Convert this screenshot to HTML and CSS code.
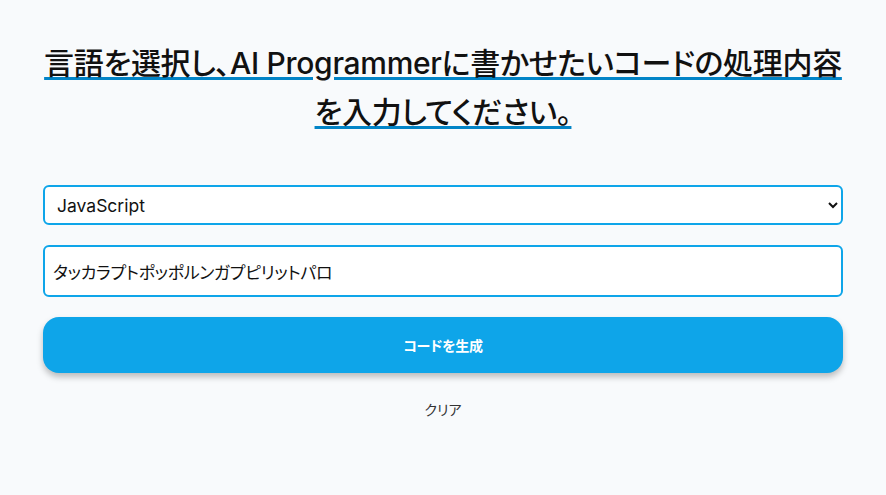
FILE: index.html
```html
<!DOCTYPE html>
<html lang="ja">
<head>
<meta charset="utf-8">
<title>AI Programmer</title>
<link rel="stylesheet" href="styles.css">
</head>
<body>
<main class="page">
  <h1 class="title"><span class="title-text">言語を選択し、AI Programmerに書かせたいコードの処理内容を入力してください。</span></h1>
  <form class="form">
    <select class="field select">
      <option>JavaScript</option>
      <option>Python</option>
      <option>TypeScript</option>
    </select>
    <input class="field input" type="text" value="タッカラプトポッポルンガプピリットパロ">
    <button type="button" class="generate">コードを生成</button>
    <button type="button" class="clear">クリア</button>
  </form>
</main>
</body>
</html>
```
FILE: styles.css
```css
* { box-sizing: border-box; }
html, body { margin: 0; padding: 0; }
body {
  background: #f8fafc;
  color: #111;
  font-family: "Noto Sans CJK JP", "Noto Sans", sans-serif;
}
.page {
  max-width: 800px;
  margin: 0 auto;
  padding-top: 39px;
}
.title {
  margin: 0 0 48px;
  text-align: center;
  font-family: "Inter", "Noto Sans CJK JP", sans-serif;
  font-size: 30px;
  font-weight: 500;
  line-height: 49px;
  letter-spacing: -0.3px;
  font-feature-settings: "palt";
  color: #111;
}
.title-text {
  text-decoration: underline;
  text-decoration-color: #0284c7;
  text-decoration-thickness: 3px;
  text-underline-offset: 3px;
}
.form {
  display: flex;
  flex-direction: column;
  gap: 20px;
}
.field {
  width: 100%;
  border: 2px solid #0ea5e9;
  border-radius: 6px;
  background: #fff;
  color: #111;
  outline: none;
}
.select {
  height: 40px;
  padding: 0 8px;
  font-family: "Inter", sans-serif;
  font-size: 17.5px;
}
.input {
  height: 52px;
  padding: 0 8px;
  font-family: "Noto Sans CJK JP", sans-serif;
  font-size: 17px;
  letter-spacing: -0.3px;
  font-feature-settings: "palt";
}
.generate {
  height: 56px;
  border: none;
  border-radius: 16px;
  background: #0ea5e9;
  color: #fff;
  font-family: "Noto Sans CJK JP", sans-serif;
  font-size: 14px;
  font-weight: 700;
  letter-spacing: -0.3px;
  font-feature-settings: "palt";
  box-shadow: 0 4px 6px rgba(0, 0, 0, 0.25);
  cursor: pointer;
}
.clear {
  align-self: center;
  margin-top: 4px;
  border: none;
  background: none;
  padding: 0;
  font-family: "Noto Sans CJK JP", sans-serif;
  font-size: 14px;
  line-height: 24px;
  color: #333;
  font-feature-settings: "palt";
  cursor: pointer;
}
```
